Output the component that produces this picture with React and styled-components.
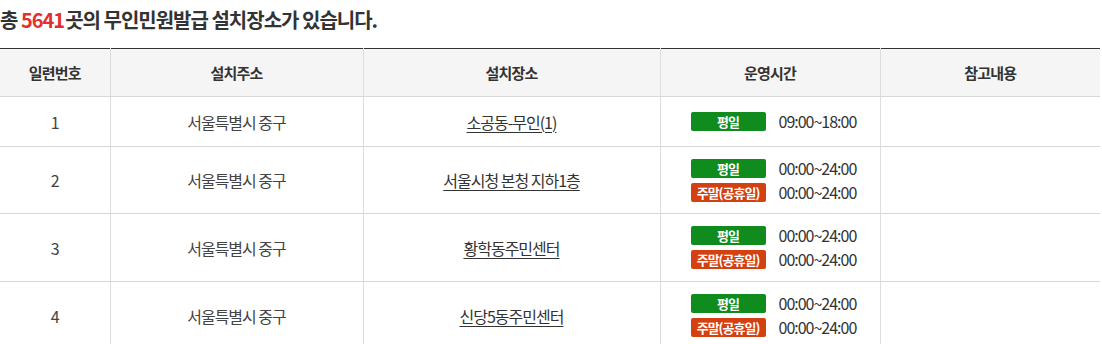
import React from "react";
import styled, { createGlobalStyle } from "styled-components";

const GlobalStyle = createGlobalStyle`
	body {
		margin: 0;
		background: #fff;
		font-family: "Noto Sans CJK KR", "Noto Sans", sans-serif;
		color: #333;
	}
`;

const StyledWrap = styled.div`
	width: 1100px;
`;

const StyledTitle = styled.h2`
	margin: 0;
	height: 48px;
	padding-top: 5px;
	box-sizing: border-box;
	font-size: 20px;
	font-weight: 700;
	letter-spacing: -1px;
	line-height: 30px;
	color: #333;
`;

const StyledCount = styled.span`
	color: #e0312f;
	margin-right: 1px;
`;

const StyledTable = styled.table`
	width: 1100px;
	border-collapse: collapse;
	table-layout: fixed;
	border-top: 1px solid #333;
`;

const StyledTh = styled.th`
	height: 47px;
	padding: 0;
	background: #f5f5f5;
	font-size: 15px;
	font-weight: 700;
	letter-spacing: -0.8px;
	color: #333;
	border-bottom: 1px solid #d8d8d8;
	border-left: 1px solid #ddd;
	&:first-child {
		border-left: none;
	}
`;

const StyledTd = styled.td`
	height: ${(p) => p.$h}px;
	padding: 0;
	text-align: center;
	font-size: 16px;
	letter-spacing: -1px;
	color: #444;
	border-bottom: 1px solid #d8d8d8;
	border-left: 1px solid #ddd;
	&:first-child {
		border-left: none;
	}
`;

const StyledLink = styled.a`
	color: #333;
	text-decoration: underline;
	text-underline-offset: 3px;
`;

const StyledTimes = styled.div`
	display: flex;
	flex-direction: column;
	gap: 5px;
	padding-left: 30px;
`;

const StyledTimeRow = styled.div`
	display: flex;
	align-items: center;
	gap: 13px;
	height: 19px;
	line-height: 19px;
`;

const StyledBadge = styled.span`
	display: inline-block;
	width: 75px;
	height: 19px;
	line-height: 19px;
	border-radius: 2px;
	background: ${(p) => (p.$holiday ? "#d4400f" : "#108b1e")};
	color: #fff;
	font-size: 13px;
	font-weight: 700;
	letter-spacing: -1px;
	text-align: center;
`;

const StyledTime = styled.span`
	font-size: 16px;
	letter-spacing: -1px;
	color: #333;
`;

const rows = [
	{ no: 1, addr: "서울특별시 중구", place: "소공동-무인(1)", times: [["평일", "09:00~18:00"]], h: 49 },
	{ no: 2, addr: "서울특별시 중구", place: "서울시청 본청 지하1층", times: [["평일", "00:00~24:00"], ["주말(공휴일)", "00:00~24:00"]], h: 66 },
	{ no: 3, addr: "서울특별시 중구", place: "황학동주민센터", times: [["평일", "00:00~24:00"], ["주말(공휴일)", "00:00~24:00"]], h: 67 },
	{ no: 4, addr: "서울특별시 중구", place: "신당5동주민센터", times: [["평일", "00:00~24:00"], ["주말(공휴일)", "00:00~24:00"]], h: 67 },
];

const App = () => {
	return (
		<StyledWrap>
			<GlobalStyle />
			<StyledTitle>
				총 <StyledCount>5641</StyledCount>곳의 무인민원발급 설치장소가 있습니다.
			</StyledTitle>
			<StyledTable>
				<colgroup>
					<col style={{ width: 110 }} />
					<col style={{ width: 253 }} />
					<col style={{ width: 297 }} />
					<col style={{ width: 220 }} />
					<col style={{ width: 220 }} />
				</colgroup>
				<thead>
					<tr>
						<StyledTh>일련번호</StyledTh>
						<StyledTh>설치주소</StyledTh>
						<StyledTh>설치장소</StyledTh>
						<StyledTh>운영시간</StyledTh>
						<StyledTh>참고내용</StyledTh>
					</tr>
				</thead>
				<tbody>
					{rows.map((r) => (
						<tr key={r.no}>
							<StyledTd $h={r.h}>{r.no}</StyledTd>
							<StyledTd $h={r.h}>{r.addr}</StyledTd>
							<StyledTd $h={r.h}>
								<StyledLink href="#">{r.place}</StyledLink>
							</StyledTd>
							<StyledTd $h={r.h}>
								<StyledTimes>
									{r.times.map(([label, time]) => (
										<StyledTimeRow key={label}>
											<StyledBadge $holiday={label !== "평일"}>{label}</StyledBadge>
											<StyledTime>{time}</StyledTime>
										</StyledTimeRow>
									))}
								</StyledTimes>
							</StyledTd>
							<StyledTd $h={r.h} />
						</tr>
					))}
				</tbody>
			</StyledTable>
		</StyledWrap>
	);
};

export default App;
